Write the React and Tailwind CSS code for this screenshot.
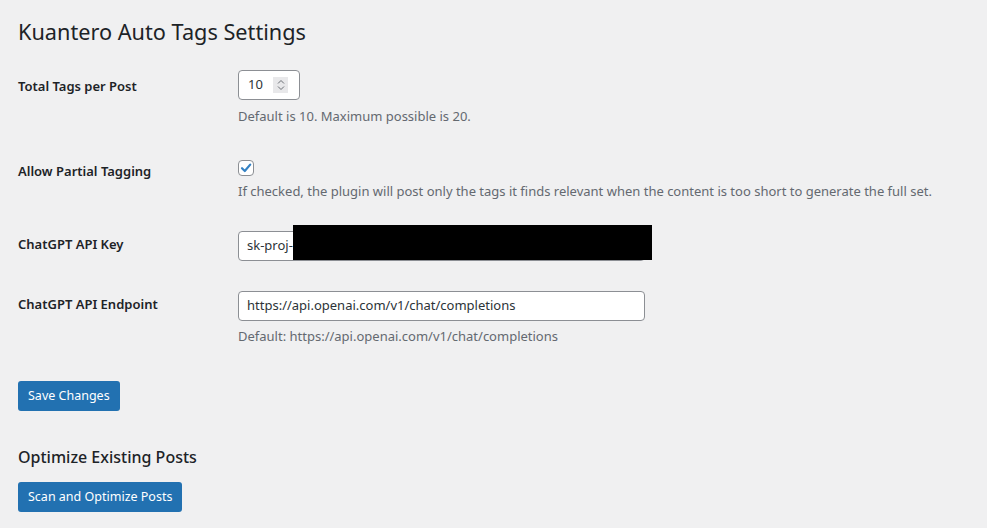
import React from "react";

const Row = ({ label, labelPad, tdPad, children }) => (
  <div className="flex">
    <div className={`w-[220px] shrink-0 ${labelPad}`}>
      <span className="text-[13px] font-semibold leading-[18px] text-[#1d2327]">{label}</span>
    </div>
    <div className={`flex-1 ${tdPad}`}>{children}</div>
  </div>
);

const Desc = ({ children, className = "" }) => (
  <p className={`text-[13px] leading-[20px] text-[#646970] ${className}`}>{children}</p>
);

const App = () => {
  return (
    <div
      className="min-h-[528px] bg-[#f0f0f1] pl-[18px] pr-5 pt-[17px] text-[#1d2327]"
      style={{ fontFamily: '"Noto Sans", "Open Sans", sans-serif' }}
    >
      <h1 className="text-[21.7px] leading-[29px] font-normal">Kuantero Auto Tags Settings</h1>

      <div className="mt-[9px]">
        <Row label="Total Tags per Post" labelPad="pt-[18px]" tdPad="pt-[15px] pb-[15px]">
          <div className="flex h-[30px] w-[62px] items-center justify-between rounded-[4px] border border-[#8c8f94] bg-white pl-[9px] pr-[11px]">
            <span className="text-[13px] text-[#2c3338]">10</span>
            <div className="flex h-[16px] w-[15px] items-center justify-center bg-[#e8e8ea]">
              <svg width="8" height="12" viewBox="0 0 8 12" fill="none" stroke="#6b6f75" strokeWidth="1">
                <path d="M1 4.5 L4 1.5 L7 4.5" />
                <path d="M1 7.5 L4 10.5 L7 7.5" />
              </svg>
            </div>
          </div>
          <Desc className="mt-[6px]">Default is 10. Maximum possible is 20.</Desc>
        </Row>

        <Row label="Allow Partial Tagging" labelPad="pt-[17px]" tdPad="pt-[19px] pb-[15px]">
          <div className="flex h-[16px] w-[16px] items-center justify-center rounded-[4px] border border-[#8c8f94] bg-white">
            <svg width="12" height="12" viewBox="0 0 12 12">
              <path d="M2 6.2 L4.8 9 L10.2 2.6" fill="none" stroke="#3582c4" strokeWidth="2.2" strokeLinecap="round" strokeLinejoin="round" />
            </svg>
          </div>
          <Desc className="mt-[5px]">
            If checked, the plugin will post only the tags it finds relevant when the content is too short to generate the full set.
          </Desc>
        </Row>

        <Row label="ChatGPT API Key" labelPad="pt-[15px]" tdPad="pt-[15px] pb-[15px]">
          <div className="relative">
            <div className="flex h-[30px] w-[407px] items-center rounded-[4px] border border-[#8c8f94] bg-white px-[8px]">
              <span className="text-[13px] text-[#2c3338]">sk-proj-</span>
            </div>
            <div className="absolute left-[55px] top-[-6px] h-[35px] w-[359px] bg-black" />
          </div>
        </Row>

        <Row label="ChatGPT API Endpoint" labelPad="pt-[15px]" tdPad="pt-[15px] pb-[15px]">
          <div className="flex h-[30px] w-[407px] items-center rounded-[4px] border border-[#8c8f94] bg-white px-[8px]">
            <span className="text-[13px] text-[#2c3338]">https://api.openai.com/v1/chat/completions</span>
          </div>
          <Desc className="mt-[5px]">Default: https://api.openai.com/v1/chat/completions</Desc>
        </Row>
      </div>

      <button className="mt-[20px] h-[30px] rounded-[3px] bg-[#2271b1] px-[10px] text-[12.5px] text-white">
        Save Changes
      </button>

      <h2 className="mt-[35px] text-[16px] leading-[22px] font-medium">Optimize Existing Posts</h2>

      <button className="mt-[14px] block h-[30px] rounded-[3px] bg-[#2271b1] px-[10px] text-[12.5px] text-white">
        Scan and Optimize Posts
      </button>
    </div>
  );
};

export default App;
